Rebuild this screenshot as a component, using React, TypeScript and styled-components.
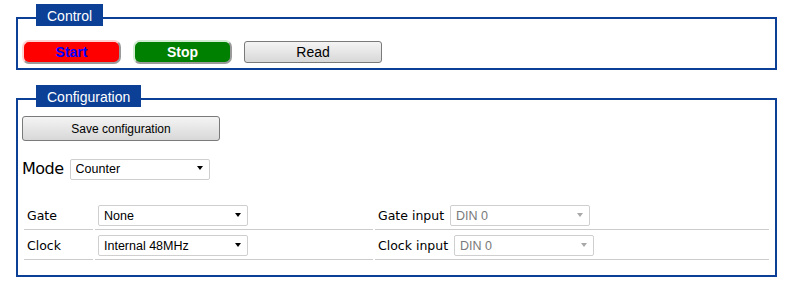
import styled, { createGlobalStyle } from "styled-components";

const BLUE = "#0c3f96";

const GlobalStyle = createGlobalStyle`
    body {
        margin: 0;
        background: #ffffff;
        font-family: "DejaVu Sans", Verdana, sans-serif;
    }
`

const Page = styled.div`
    padding: 4px 18px 0 16px;
`

const Panel = styled.fieldset<{ $gap?: number }>`
    margin: 0 0 ${p => p.$gap ?? 0}px 0;
    padding: 0 4px ${p => (p.$gap ? 4 : 13)}px 4px;
    border: 2px solid ${BLUE};
    min-width: 0;
`

const Legend = styled.legend`
    margin-left: 14px;
    padding: 4px 11px 0 11px;
    height: 18px;
    line-height: 18px;
    background: ${BLUE};
    background-clip: padding-box;
    border-bottom: 6px solid transparent;
    box-sizing: content-box;
    color: #ffffff;
    font: 14px "Liberation Sans", Arial, sans-serif;
`

const ButtonRow = styled.div`
    display: flex;
    align-items: center;
    gap: 12px;
    padding-top: 8px;
`

const ColorButton = styled.button<{ $bg: string; $fg: string; $hi: string }>`
    width: 99px;
    height: 24px;
    padding: 0;
    border: 2px solid;
    border-color: ${p => p.$hi} #9a9a9a #9a9a9a ${p => p.$hi};
    border-radius: 7px;
    background: ${p => p.$bg};
    color: ${p => p.$fg};
    font: bold 14px "Liberation Sans", Arial, sans-serif;
`

const GreyButton = styled.button<{ $w: number; $h: number; $size: number }>`
    width: ${p => p.$w}px;
    height: ${p => p.$h}px;
    padding: 0;
    border: 1px solid #7a7a7a;
    border-radius: 3px;
    background: linear-gradient(#f4f4f4, #e6e6e6 50%, #d8d8d8);
    color: #000000;
    font: ${p => p.$size}px "Liberation Sans", Arial, sans-serif;
`

const SaveButton = styled(GreyButton)`
    margin-top: 3px;
    display: block;
`

const ModeRow = styled.div`
    display: flex;
    align-items: center;
    gap: 6px;
    margin-top: 17px;
    height: 21px;
`

const ModeLabel = styled.span`
    font-size: 16px;
    letter-spacing: -0.5px;
    color: #000000;
`

const SelectBox = styled.span<{ $w: number; $off?: boolean }>`
    position: relative;
    display: inline-block;
    width: ${p => p.$w}px;
    height: 21px;
    vertical-align: middle;

    &::after {
        content: "";
        position: absolute;
        right: 7px;
        top: 8px;
        border-left: 3.5px solid transparent;
        border-right: 3.5px solid transparent;
        border-top: 4px solid ${p => (p.$off ? "#a8a8a8" : "#000000")};
        pointer-events: none;
    }
`

const Select = styled.select`
    appearance: none;
    width: 100%;
    height: 100%;
    margin: 0;
    padding: 0 0 0 5px;
    border: 1px solid #cfcfcf;
    border-radius: 2px;
    background: #ffffff;
    color: #000000;
    font: 12.5px "Liberation Sans", Arial, sans-serif;

    &:disabled {
        color: #7a7a7a;
        opacity: 1;
    }
`

const Table = styled.table`
    width: 100%;
    margin-top: 21px;
    border-spacing: 2px;
    table-layout: fixed;
`

const Cell = styled.td<{ $w?: number }>`
    width: ${p => (p.$w ? p.$w + "px" : "auto")};
    height: 27px;
    padding: 0 3px;
    border-bottom: 1px solid #cccccc;
    font-size: 12.5px;
    color: #000000;
    white-space: nowrap;
`

const InlineLabel = styled.span`
    margin-right: 6px;
    vertical-align: middle;
`

const DropDown = ({ w, value, off }: { w: number; value: string; off?: boolean }) => (
    <SelectBox $w={w} $off={off}>
        <Select disabled={off} defaultValue={value}>
            <option>{value}</option>
        </Select>
    </SelectBox>
)

const ROWS = [
    { label: "Gate", value: "None", input: "Gate input" },
    { label: "Clock", value: "Internal 48MHz", input: "Clock input" },
]

export default function App() {
    return (
        <Page>
            <GlobalStyle />
            <Panel $gap={15}>
                <Legend>Control</Legend>
                <ButtonRow>
                    <ColorButton $bg="#ff0000" $fg="#0000ff" $hi="#ffd2d2">Start</ColorButton>
                    <ColorButton $bg="#008000" $fg="#ffffff" $hi="#d2ecd2">Stop</ColorButton>
                    <GreyButton $w={138} $h={22} $size={14}>Read</GreyButton>
                </ButtonRow>
            </Panel>

            <Panel>
                <Legend>Configuration</Legend>
                <SaveButton $w={198} $h={25} $size={12}>Save configuration</SaveButton>
                <ModeRow>
                    <ModeLabel>Mode</ModeLabel>
                    <DropDown w={140} value="Counter" />
                </ModeRow>
                <Table>
                    <tbody>
                        {ROWS.map(r => (
                            <tr key={r.label}>
                                <Cell $w={63}>{r.label}</Cell>
                                <Cell $w={272}>
                                    <DropDown w={150} value={r.value} />
                                </Cell>
                                <Cell>
                                    <InlineLabel>{r.input}</InlineLabel>
                                    <DropDown w={140} value="DIN 0" off />
                                </Cell>
                            </tr>
                        ))}
                    </tbody>
                </Table>
            </Panel>
        </Page>
    )
}
